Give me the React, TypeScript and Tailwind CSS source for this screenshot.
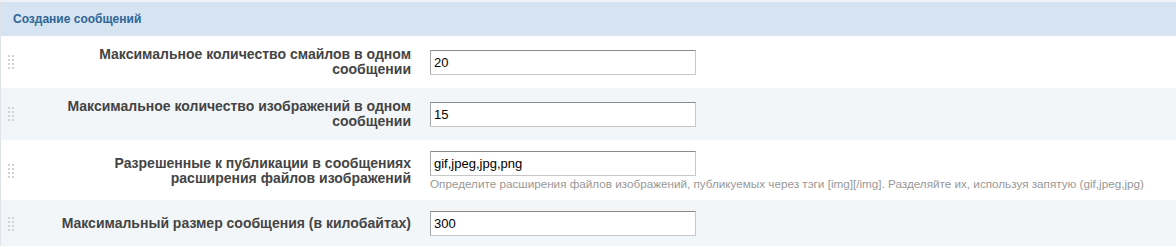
import React from "react";

const Grip = () => (
  <div className="w-[22px] flex-none flex items-center self-stretch pl-[7px]">
    <div className="grid grid-cols-2 gap-x-[2px] gap-y-[2px]">
      {Array.from({ length: 8 }).map((_, i) => (
        <span key={i} className="block w-[2px] h-[2px] bg-[#cfd3d8]" />
      ))}
    </div>
  </div>
);

type RowProps = {
  label: React.ReactNode;
  value: string;
  hint?: string;
  alt?: boolean;
  extra?: string;
};

const Row = ({ label, value, hint, alt, extra }: RowProps) => (
  <div className={`flex items-center ${alt ? "bg-[#f3f6f9]" : "bg-white"} ${extra ?? "py-[11px]"}`}>
    <Grip />
    <div className="w-[398px] flex-none pl-[26px] pr-[10px] text-right text-[14px] leading-[15px] font-bold text-[#444]">
      {label}
    </div>
    <div className="pl-[9px] flex flex-col">
      <input
        readOnly
        value={value}
        className="w-[266px] h-[25px] px-[3px] text-[13px] text-black bg-white border border-[#c8c8c8] border-t-[#8a8a8a] border-l-[#a8a8a8] outline-none"
        style={{ fontFamily: '"Liberation Sans", Arial, sans-serif' }}
      />
      {hint && (
        <div className="mt-[1px] text-[11.7px] leading-[13px] text-[#999] whitespace-nowrap">{hint}</div>
      )}
    </div>
  </div>
);

export default function App() {
  return (
    <div
      className="w-[1176px] h-[247px] bg-white overflow-hidden"
      style={{ fontFamily: '"Liberation Sans", Arial, sans-serif' }}
    >
      <div className="h-[2px] bg-[#eef2f7]" />
      <div className="border-l border-[#dfe4ea]">
        <div className="h-[34px] bg-[#d6e3f0] flex items-center pl-[12px] text-[12px] font-bold text-[#2f6597]">
          Создание сообщений
        </div>
        <Row label="Максимальное количество смайлов в одном сообщении" value="20" />
        <Row label="Максимальное количество изображений в одном сообщении" value="15" alt />
        <Row
          label="Разрешенные к публикации в сообщениях расширения файлов изображений"
          value="gif,jpeg,jpg,png"
          hint="Определите расширения файлов изображений, публикуемых через тэги [img][/img]. Разделяйте их, используя запятую (gif,jpeg,jpg)"
          extra="pt-[11px] pb-[10px]"
        />
        <Row
          label="Максимальный размер сообщения (в килобайтах)"
          value="300"
          alt
          extra="pt-[11px] pb-[10px]"
        />
      </div>
    </div>
  );
}
